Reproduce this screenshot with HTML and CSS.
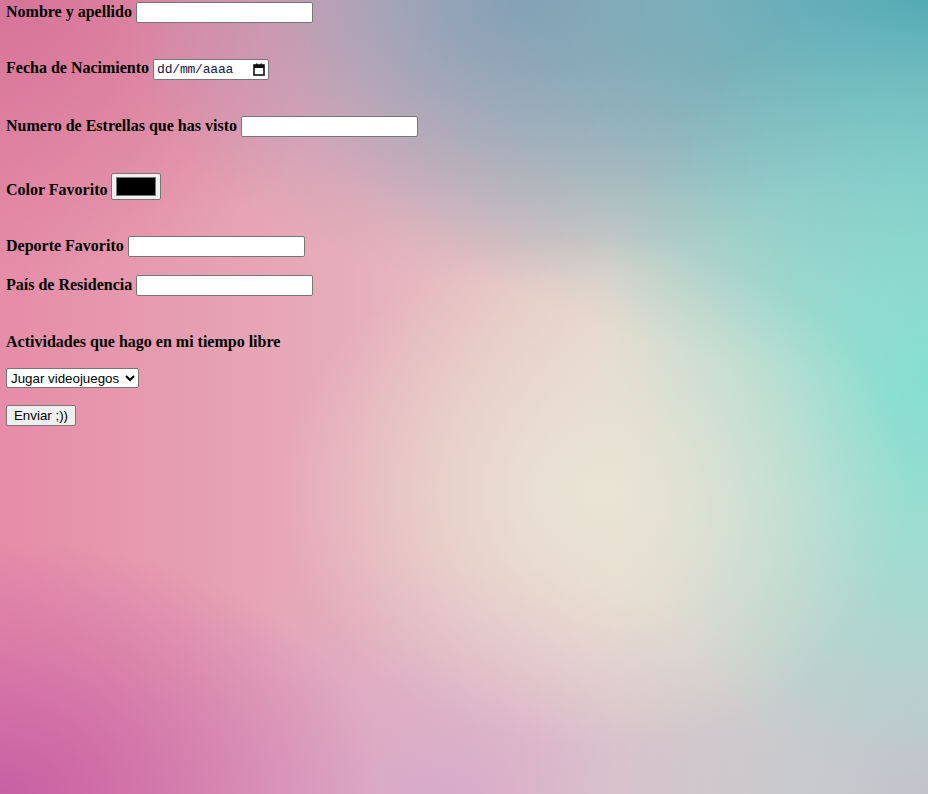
FILE: index.html
```html
<!DOCTYPE html>
<html lang="es">
<head>
<meta charset="utf-8">
<title>Formulario</title>
<link rel="stylesheet" href="styles.css">
</head>
<body>
<form class="form">
  <div class="row gap-lg">
    <label class="label" for="nombre">Nombre y apellido</label>
    <input class="text-input" id="nombre" type="text">
  </div>
  <div class="row gap-lg">
    <label class="label">Fecha de Nacimiento</label>
    <span class="date-input">
      <span class="date-text">dd/mm/aaaa</span>
      <svg class="cal-icon" width="12" height="13" viewBox="0 0 12 13" aria-hidden="true">
        <rect x="1" y="2" width="10" height="10" fill="none" stroke="#111" stroke-width="1.6"/>
        <rect x="1" y="2" width="10" height="3" fill="#111"/>
        <rect x="3" y="0.5" width="1.6" height="2" fill="#111"/>
        <rect x="7.4" y="0.5" width="1.6" height="2" fill="#111"/>
      </svg>
    </span>
  </div>
  <div class="row gap-lg">
    <label class="label" for="estrellas">Numero de Estrellas que has visto</label>
    <input class="text-input" id="estrellas" type="text">
  </div>
  <div class="row gap-color">
    <label class="label color-label" for="color">Color Favorito</label>
    <input class="color-input" id="color" type="color" value="#000000">
  </div>
  <div class="row gap-sm">
    <label class="label" for="deporte">Deporte Favorito</label>
    <input class="text-input" id="deporte" type="text">
  </div>
  <div class="row gap-lg">
    <label class="label" for="pais">País de Residencia</label>
    <input class="text-input" id="pais" type="text">
  </div>
  <div class="heading gap-heading">Actividades que hago en mi tiempo libre</div>
  <div class="row gap-select">
    <select class="select">
      <option>Jugar videojuegos</option>
      <option>Leer</option>
      <option>Hacer deporte</option>
    </select>
  </div>
  <div class="row">
    <button class="button" type="submit">Enviar ;))</button>
  </div>
</form>
</body>
</html>
```
FILE: styles.css
```css
html, body {
  margin: 0;
  padding: 0;
  height: 100%;
}
body {
  font-family: "Liberation Serif", "Times New Roman", serif;
  font-size: 16px;
  color: #000;
  background-color: #e0b0bf;
  background-image:
    radial-gradient(ellipse 34% 32% at 64% 62%, rgba(234,230,214,0.9) 0%, rgba(234,230,214,0) 100%),
    radial-gradient(ellipse 36% 50% at 100% 48%, rgba(128,222,208,0.95) 0%, rgba(128,222,208,0) 100%),
    radial-gradient(ellipse 70% 48% at 100% 0%, rgba(82,168,180,1) 0%, rgba(82,168,180,0) 100%),
    radial-gradient(ellipse 42% 36% at 55% 0%, rgba(158,154,182,0.95) 0%, rgba(158,154,182,0) 100%),
    radial-gradient(ellipse 42% 32% at 0% 100%, rgba(200,96,164,1) 0%, rgba(200,96,164,0) 100%),
    radial-gradient(ellipse 45% 38% at 100% 100%, rgba(196,195,203,1) 0%, rgba(196,195,203,0) 100%),
    radial-gradient(ellipse 40% 30% at 48% 100%, rgba(214,168,204,0.85) 0%, rgba(214,168,204,0) 100%),
    radial-gradient(ellipse 40% 35% at 0% 0%, rgba(214,116,152,1) 0%, rgba(214,116,152,0) 100%),
    linear-gradient(to right, #e68ca8 0%, #e6aeba 38%, #e6d6cc 66%, #c4dcd4 100%);
  background-repeat: no-repeat;
  min-height: 794px;
}
.form {
  display: flex;
  flex-direction: column;
  align-items: flex-start;
  padding: 2px 6px 0;
}
.row {
  display: flex;
  align-items: baseline;
  gap: 4px;
}
.gap-lg { margin-bottom: 36px; }
.gap-color { margin-bottom: 36px; align-items: center; }
.gap-sm { margin-bottom: 18px; }
.gap-heading { margin-top: 1px; margin-bottom: 17px; }
.gap-select { margin-bottom: 17px; }
.label {
  font-weight: bold;
  line-height: 18px;
}
.color-label {
  margin-top: 7px;
}
.heading {
  font-weight: bold;
  line-height: 18px;
}
.text-input {
  box-sizing: border-box;
  width: 177px;
  height: 21px;
  margin: 0;
  padding: 1px 2px;
  border: 1px solid #767676;
  border-radius: 2px;
  background: #fff;
  font-family: "Liberation Sans", Arial, sans-serif;
  font-size: 13.333px;
}
.date-input {
  box-sizing: border-box;
  display: inline-flex;
  align-items: center;
  justify-content: space-between;
  width: 116px;
  height: 21px;
  padding: 0 3px 0 3px;
  border: 1px solid #767676;
  border-radius: 2px;
  background: #fff;
}
.date-text {
  font-family: "Liberation Mono", "DejaVu Sans Mono", monospace;
  font-size: 13px;
  line-height: 19px;
  color: #15154a;
  letter-spacing: -0.2px;
}
.cal-icon {
  display: block;
}
.color-input {
  box-sizing: border-box;
  width: 50px;
  height: 27px;
  margin: 0;
  padding: 1px 2px;
  border: 1px solid #767676;
  border-radius: 2px;
  background: #efefef;
  -webkit-appearance: none;
  appearance: none;
  cursor: pointer;
}
.color-input::-webkit-color-swatch-wrapper {
  padding: 2px 2px;
}
.color-input::-webkit-color-swatch {
  border: 1px solid #777;
  border-radius: 0;
}
.select {
  box-sizing: border-box;
  width: 133px;
  height: 20px;
  margin: 0;
  border: 1px solid #767676;
  border-radius: 2px;
  background: #fff;
  font-family: "Liberation Sans", Arial, sans-serif;
  font-size: 13.333px;
  color: #000;
}
.button {
  box-sizing: border-box;
  width: 70px;
  height: 21px;
  margin: 0;
  padding: 1px 4px;
  border: 1px solid #767676;
  border-radius: 2px;
  background: #efefef;
  font-family: "Liberation Sans", Arial, sans-serif;
  font-size: 13.333px;
  color: #000;
  white-space: nowrap;
  text-align: center;
}
```
